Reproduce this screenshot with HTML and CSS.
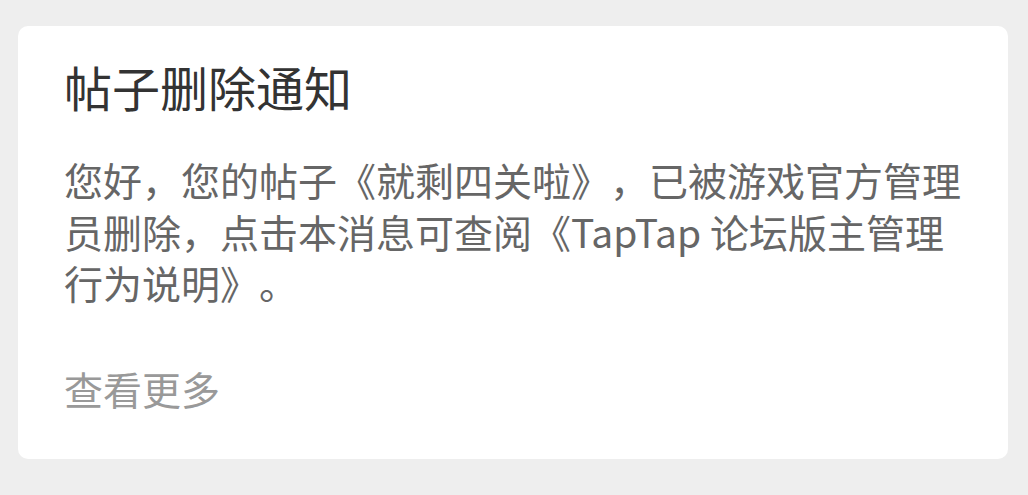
FILE: index.html
```html
<!DOCTYPE html>
<html lang="zh-CN">
<head>
<meta charset="utf-8">
<link rel="stylesheet" href="styles.css">
</head>
<body>
<div class="card">
  <h1 class="title">帖子删除通知</h1>
  <p class="content">您好，您的帖子《就剩四关啦》，已被游戏官方管理员删除，点击本消息可查阅《TapTap 论坛版主管理行为说明》。</p>
  <div class="more">查看更多</div>
</div>
</body>
</html>
```
FILE: styles.css
```css
html, body {
  margin: 0;
  padding: 0;
  background: #eeeeee;
}
body {
  padding: 26px 20px 0 18px;
  font-family: "Noto Sans CJK SC", "Noto Sans", sans-serif;
  text-spacing-trim: space-all;
}
.card {
  width: 898px;
  background: #ffffff;
  border-radius: 10px;
  padding: 32px 46px 45px 46px;
}
.title {
  margin: 0;
  font-size: 48px;
  line-height: 56px;
  font-weight: 400;
  color: #333333;
}
.content {
  margin: 40px 0 0 0;
  font-size: 39px;
  line-height: 51.5px;
  color: #666666;
}
.more {
  margin-top: 54px;
  font-size: 39px;
  line-height: 51.5px;
  color: #999999;
}
```
